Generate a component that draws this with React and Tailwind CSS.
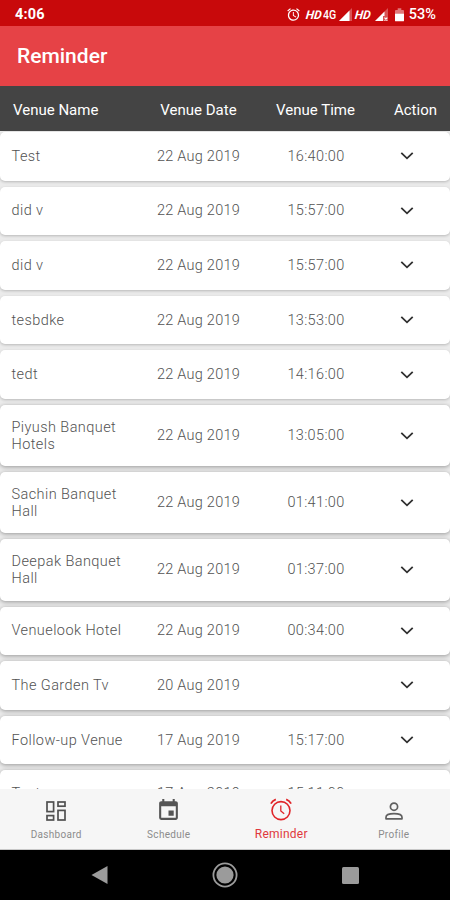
import React from "react";
import { MdEvent, MdAlarm } from "react-icons/md";

const rows = [
  ["Test", "22 Aug 2019", "16:40:00"],
  ["did v", "22 Aug 2019", "15:57:00"],
  ["did v", "22 Aug 2019", "15:57:00"],
  ["tesbdke", "22 Aug 2019", "13:53:00"],
  ["tedt", "22 Aug 2019", "14:16:00"],
  ["Piyush Banquet Hotels", "22 Aug 2019", "13:05:00", true],
  ["Sachin Banquet Hall", "22 Aug 2019", "01:41:00", true],
  ["Deepak Banquet Hall", "22 Aug 2019", "01:37:00", true],
  ["Venuelook Hotel", "22 Aug 2019", "00:34:00"],
  ["The Garden Tv", "20 Aug 2019", ""],
  ["Follow-up Venue", "17 Aug 2019", "15:17:00"],
  ["Test", "17 Aug 2019", "15:11:00"],
];

function Chevron() {
  return (
    <svg width="14" height="10" viewBox="0 0 14 10" fill="none" stroke="#303030" strokeWidth="1.8">
      <path d="M1.3 1.8 L7 7.3 L12.7 1.8" />
    </svg>
  );
}

function Signal({ cut }) {
  return (
    <svg width="13" height="13" viewBox="0 0 13 13">
      <path d="M13 0V13H0Z" fill="#fff" opacity="0.3" />
      {cut ? (
        <>
          <path d="M9.5 3.5V8H8V13H0Z" fill="#fff" />
          <path d="M9.5 9.7l2.8 2.8M12.3 9.7l-2.8 2.8" stroke="#fff" strokeWidth="1.2" />
        </>
      ) : (
        <path d="M10.5 2.5V13H0Z" fill="#fff" />
      )}
    </svg>
  );
}

function Battery() {
  return (
    <svg width="9" height="14" viewBox="0 0 10 15" fill="#fff">
      <path d="M3 0h4v2h2q1 0 1 1v3.5H0V3q0-1 1-1h2z" opacity="0.45" />
      <path d="M0 6h10v7.5q0 1-1 1H1q-1 0-1-1z" />
    </svg>
  );
}

function DashboardIcon() {
  return (
    <svg width="20" height="20" viewBox="0 0 20 20" fill="none" stroke="#505050" strokeWidth="1.7">
      <rect x="1" y="1" width="6.6" height="9.6" />
      <rect x="12" y="1" width="7" height="4.2" />
      <rect x="1" y="14.6" width="6.6" height="4.4" />
      <rect x="12" y="9.4" width="7" height="9.6" />
    </svg>
  );
}

function AlarmThin() {
  return (
    <svg width="22" height="23" viewBox="0 0 22 23" fill="none" stroke="#e02428" strokeWidth="1.6">
      <circle cx="11" cy="12.6" r="9" />
      <path d="M10.8 7.5V13l3.4 2.8" strokeWidth="1.3" />
      <path d="M0.9 5.6 Q2.4 2.6 5.8 1.3 M21.1 5.6 Q19.6 2.6 16.2 1.3" strokeWidth="1.8" />
    </svg>
  );
}

function Person() {
  return (
    <svg width="18" height="18" viewBox="0 0 18 18" fill="none" stroke="#606060" strokeWidth="1.7">
      <circle cx="9" cy="4.7" r="3.6" />
      <path d="M1 16.8V15.2C1 12.7 5 11.6 9 11.6s8 1.1 8 3.6v1.6z" strokeLinejoin="round" />
    </svg>
  );
}

function Tab({ icon, label, active }) {
  return (
    <div className="flex flex-1 flex-col items-center">
      <div className={active ? "flex h-[38px] items-center justify-center pt-[2px]" : "flex h-[41px] items-center justify-center pt-[2px]"}>{icon}</div>
      <span
        className={
          active
            ? "text-[12px] leading-[14px] tracking-[0.25px] text-[#e0383c]"
            : "text-[10px] leading-[10px] tracking-[0.3px] text-[#8c8c8c]"
        }
      >
        {label}
      </span>
    </div>
  );
}

export default function App() {
  return (
    <div className="flex h-[900px] w-[450px] flex-col overflow-hidden bg-[#ebebeb] font-[Roboto,sans-serif]">
      <header className="flex h-[26px] shrink-0 items-center bg-[#c8090b] pt-[3px] pr-[14px] pl-[15px] text-white">
        <span className="text-[14.5px] font-bold tracking-[0.2px]">4:06</span>
        <div className="ml-auto flex items-center">
          <span className="pb-[1px]"><MdAlarm size={15} /></span>
          <span className="ml-[5px] inline-block w-[16px] origin-left -skew-x-6 text-[12px] font-bold italic">HD</span>
          <span className="ml-[1px] w-[14px] origin-left scale-x-[0.88] text-[12px] font-medium">4G</span>
          <span className="ml-[2px] pb-[1px]"><Signal /></span>
          <span className="ml-[3px] inline-block w-[16px] origin-left -skew-x-6 text-[12px] font-bold italic">HD</span>
          <span className="ml-[4px] pb-[1px]"><Signal cut /></span>
          <span className="ml-[7px]"><Battery /></span>
          <span className="ml-[5px] text-[14.5px] font-medium">53%</span>
        </div>
      </header>
      <div className="flex h-[60px] shrink-0 items-center bg-[#e64246] pt-[2px] pl-[17px]">
        <h1 className="text-[21px] font-medium text-white">Reminder</h1>
      </div>
      <div className="grid h-[45px] shrink-0 grid-cols-[140px_117px_117px_76px] items-center bg-[#444444] pt-[3px] text-[15px] text-white">
        <span className="pl-[13px]">Venue Name</span>
        <span className="text-center">Venue Date</span>
        <span className="text-center">Venue Time</span>
        <span className="pr-[13px] text-right">Action</span>
      </div>
      <main className="flex min-h-0 flex-1 flex-col gap-[6px] overflow-hidden pt-[1px]">
        {rows.map(([name, date, time, tall], i) => (
          <div
            key={i}
            className={
              (tall ? "h-[61.2px]" : i === rows.length - 1 ? "h-[47px]" : "h-[48.6px]") +
              (i > 4 ? " shadow-[0_1px_4px_rgba(0,0,0,0.36)]" : " shadow-[0_1px_3px_rgba(0,0,0,0.22)]") +
              " grid shrink-0 grid-cols-[140px_117px_117px_66px] items-center rounded-[5px] bg-white text-[14.5px] leading-[17px] font-light tracking-[0.25px] text-[#525252]"
            }
          >
            <span className="pr-[8px] pl-[11.5px] tracking-[0.42px]">{name}</span>
            <span className="text-center">{date}</span>
            <span className="pl-[1px] text-center tracking-[0.35px]">{time}</span>
            <span className="flex justify-center"><Chevron /></span>
          </div>
        ))}
      </main>
      <nav className="z-10 flex h-[61px] shrink-0 border-b border-[#c8c8c8] bg-[#f6f6f6]">
        <Tab icon={<DashboardIcon />} label="Dashboard" />
        <Tab icon={<MdEvent size={25} color="#555555" />} label="Schedule" />
        <Tab icon={<AlarmThin />} label="Reminder" active />
        <Tab icon={<Person />} label="Profile" />
      </nav>
      <footer className="flex h-[50px] shrink-0 items-center justify-between bg-black pr-[91px] pl-[91px]">
        <svg width="17" height="18" viewBox="0 0 17 18"><path d="M16.5 0V18L0.5 9Z" fill="#9b9b9b" /></svg>
        <svg width="26" height="26" viewBox="0 0 26 26">
          <circle cx="13" cy="13" r="11.6" fill="none" stroke="#9b9b9b" strokeWidth="1.8" />
          <circle cx="13" cy="13" r="8.6" fill="#9b9b9b" />
        </svg>
        <svg width="17" height="17" viewBox="0 0 17 17"><rect width="17" height="17" rx="1.5" fill="#9b9b9b" /></svg>
      </footer>
    </div>
  );
}
